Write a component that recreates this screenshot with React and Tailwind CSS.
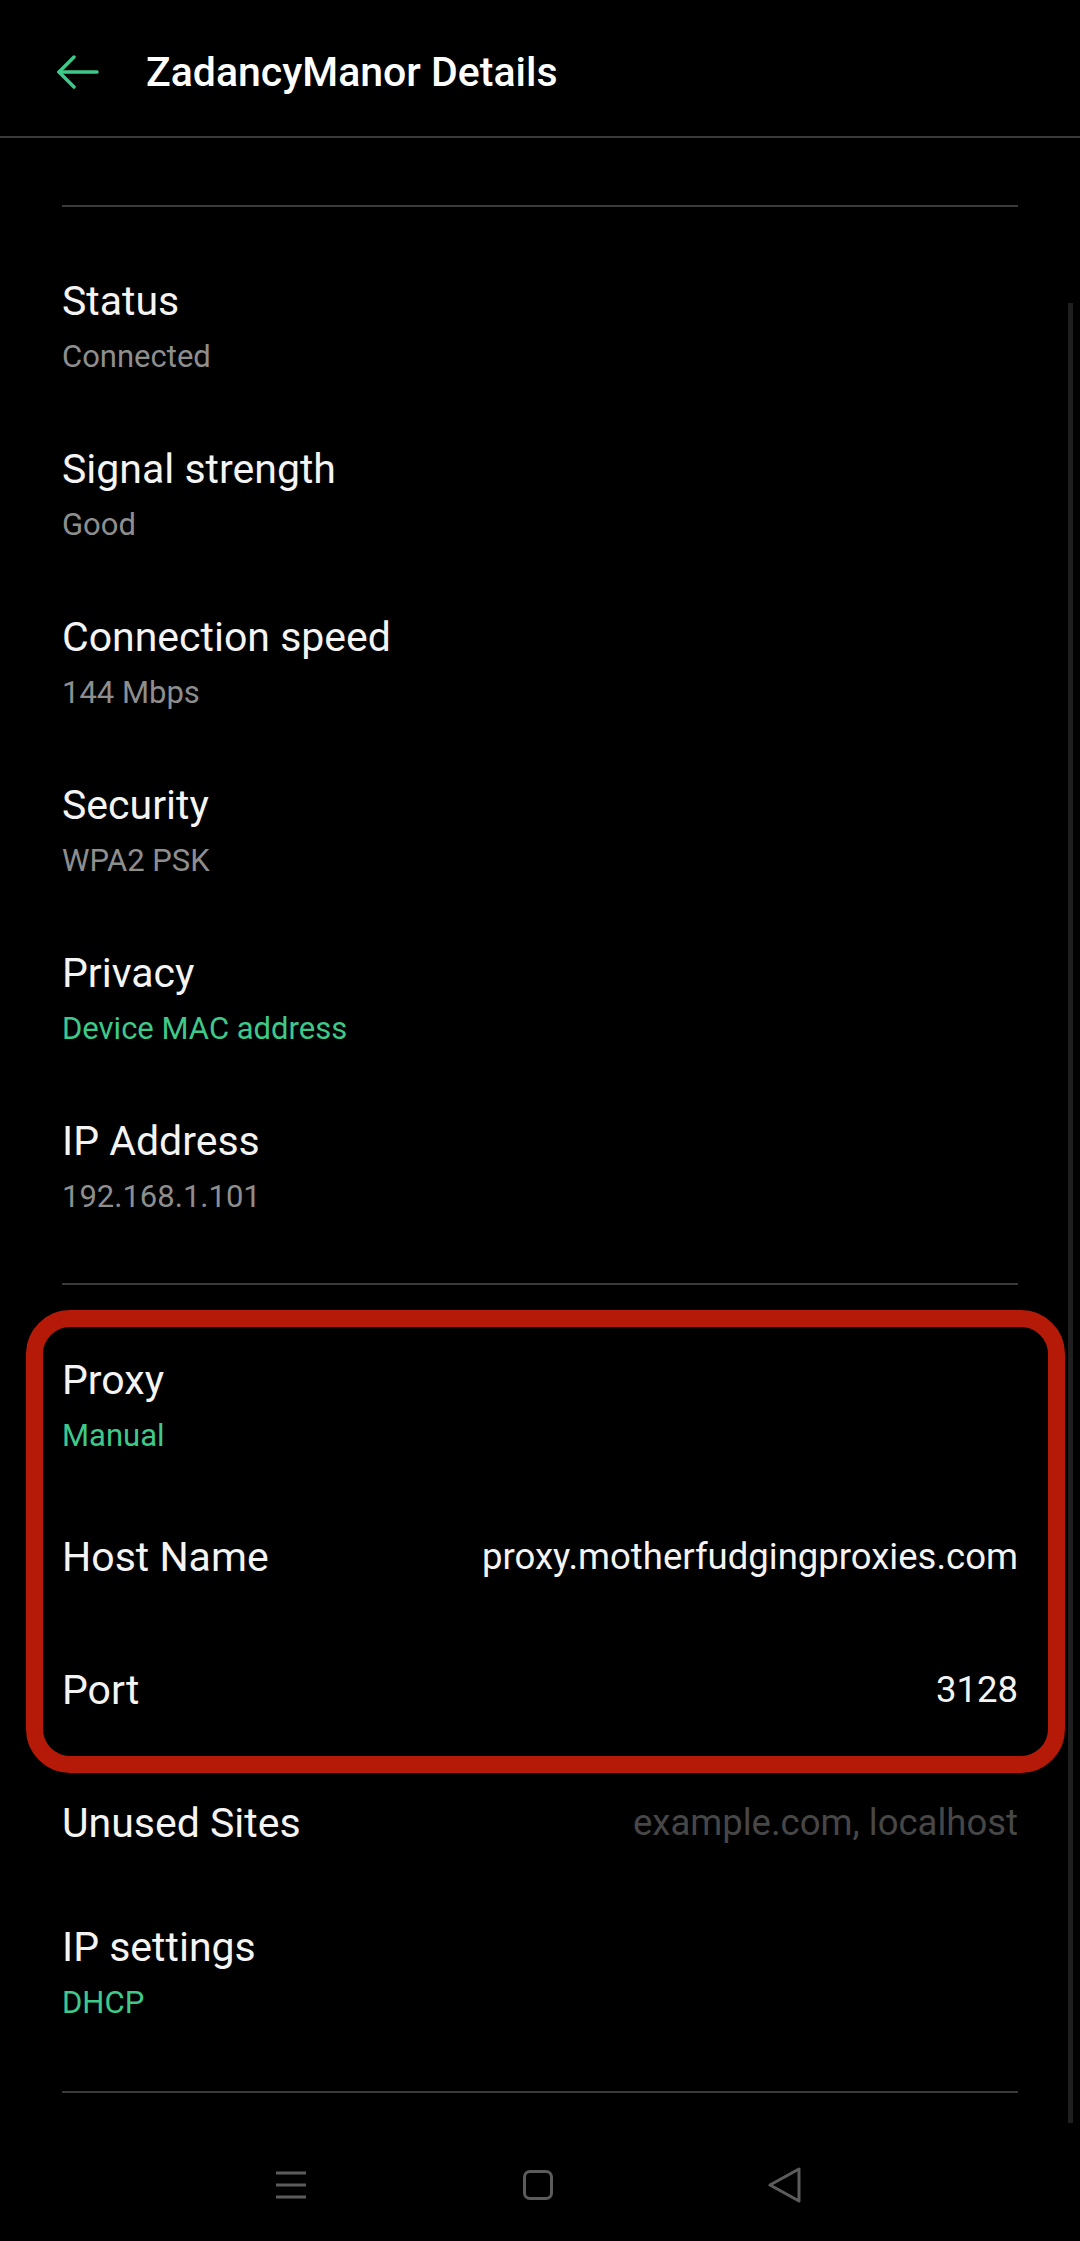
import React from 'react'

const font = { fontFamily: 'Roboto, "Noto Sans", sans-serif' }

const details = [
  { title: 'Status', sub: 'Connected' },
  { title: 'Signal strength', sub: 'Good' },
  { title: 'Connection speed', sub: '144 Mbps' },
  { title: 'Security', sub: 'WPA2 PSK' },
  { title: 'Privacy', sub: 'Device MAC address', green: true },
  { title: 'IP Address', sub: '192.168.1.101' },
]

const Item = ({ title, sub, green }) => (
  <div className="h-[168px] pt-[70px]">
    <div className="text-[41px] leading-[48px] text-[#f4f4f4]">{title}</div>
    <div
      className={
        'mt-[14px] text-[31px] leading-[36px] ' +
        (green ? 'text-[#3ec98a]' : 'text-[#8e8e8e]')
      }
    >
      {sub}
    </div>
  </div>
)

const ValueRow = ({ title, value, hint }) => (
  <div className="h-[133px] flex items-center justify-between">
    <div className="text-[41px] leading-[48px] text-[#f4f4f4]">{title}</div>
    <div
      className={
        'text-[36.5px] leading-[48px] ' +
        (hint ? 'text-[#474747]' : 'text-[#f4f4f4]')
      }
    >
      {value}
    </div>
  </div>
)

const Divider = ({ className = '' }) => (
  <div className={'h-[2px] bg-[#3a3a3a] ' + className} />
)

export default function App() {
  return (
    <div
      className="relative w-[1080px] h-[2241px] bg-black overflow-hidden"
      style={font}
    >
      {/* header */}
      <div className="h-[138px] pt-2 flex items-center border-b-2 border-[#3a3a3a]">
        <svg
          className="ml-[56px]"
          width="44"
          height="34"
          viewBox="0 0 44 34"
          fill="none"
          stroke="#3ec98a"
          strokeWidth="3.5"
          strokeLinecap="round"
          strokeLinejoin="round"
        >
          <path d="M3 17H41" />
          <path d="M18 2L3 17L18 32" />
        </svg>
        <h1 className="ml-[46px] text-[41px] leading-[48px] font-medium text-white">
          ZadancyManor Details
        </h1>
      </div>

      <div className="px-[62px]">
        <Divider className="mt-[67px]" />

        {details.map((d) => (
          <Item key={d.title} {...d} />
        ))}

        <Divider className="mt-[68px]" />

        <div className="h-[205px] pt-[71px]">
          <div className="text-[41px] leading-[48px] text-[#f4f4f4]">Proxy</div>
          <div className="mt-[14px] text-[31px] leading-[36px] text-[#3ec98a]">
            Manual
          </div>
        </div>
        <ValueRow title="Host Name" value="proxy.motherfudgingproxies.com" />
        <ValueRow title="Port" value="3128" />
        <ValueRow title="Unused Sites" value="example.com, localhost" hint />

        <div className="h-[202px] pt-[34px]">
          <div className="text-[41px] leading-[48px] text-[#f4f4f4]">
            IP settings
          </div>
          <div className="mt-[14px] text-[31px] leading-[36px] text-[#3ec98a]">
            DHCP
          </div>
        </div>

        <Divider />
      </div>

      {/* system nav bar */}
      <div className="mt-[47px] h-[90px] pl-[261px] flex items-center gap-[187px]">
        <div className="w-[60px] flex justify-center">
          <svg width="32" height="30" viewBox="0 0 32 30" stroke="#5c5c5c" strokeWidth="3">
            <path d="M1 3H31M1 15H31M1 27H31" />
          </svg>
        </div>
        <div className="w-[60px] flex justify-center">
          <div className="w-[30px] h-[30px] rounded-[7px] border-[3px] border-[#5c5c5c]" />
        </div>
        <div className="w-[60px] flex justify-center">
          <svg width="34" height="36" viewBox="0 0 34 36" fill="none" stroke="#5c5c5c" strokeWidth="3" strokeLinejoin="round">
            <path d="M31 2V34L2 18Z" />
          </svg>
        </div>
      </div>

      {/* scrollbar */}
      <div className="absolute left-[1068px] top-[303px] w-[5px] h-[1820px] bg-[#1f1f1f]" />

      {/* red annotation frame */}
      <div className="absolute left-[26px] top-[1310px] w-[1039px] h-[463px] rounded-[44px] border-[17px] border-[#b51a08]" />
    </div>
  )
}
